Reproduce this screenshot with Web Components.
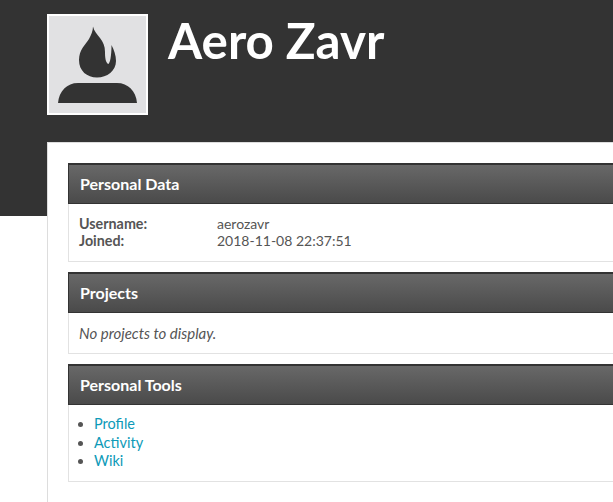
<!DOCTYPE html>
<html>
<head>
<meta charset="utf-8">
<title>Aero Zavr</title>
<style>
    html, body { margin: 0; height: 100%; overflow: hidden; background: #fff; }
    body { font-family: Lato, "Open Sans", sans-serif; font-size: 14px; color: #555; }
</style>
</head>
<body>
<profile-header name="Aero Zavr"></profile-header>
<main-panel>
    <info-section title="Personal Data">
        <data-row label="Username:" value="aerozavr"></data-row>
        <data-row label="Joined:" value="2018-11-08 22:37:51"></data-row>
    </info-section>
    <info-section title="Projects">
        <empty-note>No projects to display.</empty-note>
    </info-section>
    <info-section title="Personal Tools">
        <link-list>
            <a href="#">Profile</a>
            <a href="#">Activity</a>
            <a href="#">Wiki</a>
        </link-list>
    </info-section>
</main-panel>

<script>
class ProfileHeader extends HTMLElement {
    constructor() {
        super();
        const shadow = this.attachShadow({mode: 'open'});
        const name = this.getAttribute('name') || '';

        shadow.innerHTML = `
            <style>
                :host {
                    background: #333;
                    box-sizing: border-box;
                    display: flex;
                    gap: 20px;
                    height: 216px;
                    padding: 14px 0 0 47px;
                }

                .avatar {
                    background: #e1e1e3;
                    border: 2px solid #fff;
                    box-sizing: border-box;
                    display: block;
                    flex: none;
                    height: 101px;
                    width: 101px;
                }

                h1 {
                    color: #fff;
                    font-size: 49.300px;
                    font-weight: 700;
                    line-height: 52px;
                    margin: 0;
                }
            </style>
            <svg class="avatar" viewBox="2 2 97 97">
                <path fill="#333" d="M46 12.500C47 17 50 20 53 24C56 28 58 32 58 38C58 43 58.500 48 61 50C63 50 64.500 42 64.500 31C67 36 69 41 69 47C69 57 60 63.500 50 63.500C40 63.500 32 57 32 46C32 36 38 31 42 25C44 21 46 17 46 12.500Z"></path>
                <path fill="#333" d="M11 89C12 77 20 69 31 69H70C81 69 89 77 90 89Z"></path>
            </svg>
            <h1>${name}</h1>
        `;
    }
}

class MainPanel extends HTMLElement {
    constructor() {
        super();
        const shadow = this.attachShadow({mode: 'open'});

        shadow.innerHTML = `
            <style>
                :host {
                    background: #fff;
                    border: 1px solid #ddd;
                    box-sizing: border-box;
                    display: flex;
                    flex-direction: column;
                    gap: 10px;
                    margin: -74px 0 0 47px;
                    min-height: 400px;
                    padding: 20px 0 0 20px;
                    width: 640px;
                }
            </style>
            <slot></slot>
        `;
    }
}

class InfoSection extends HTMLElement {
    constructor() {
        super();
        const shadow = this.attachShadow({mode: 'open'});
        const title = this.getAttribute('title') || '';

        shadow.innerHTML = `
            <style>
                :host {
                    border: 1px solid #e2e2e2;
                    border-top: 0;
                    display: block;
                }

                h2 {
                    background: linear-gradient(#686868, #4a4a4a);
                    border: 1px solid #333;
                    border-top-width: 2px;
                    box-sizing: border-box;
                    color: #fff;
                    font-size: 16px;
                    font-weight: 700;
                    height: 41px;
                    line-height: 37px;
                    margin: 0 -1px;
                    padding-left: 11px;
                }
            </style>
            <h2>${title}</h2>
            <slot></slot>
        `;
    }
}

class DataRow extends HTMLElement {
    constructor() {
        super();
        const shadow = this.attachShadow({mode: 'open'});
        const label = this.getAttribute('label') || '';
        const value = this.getAttribute('value') || '';

        shadow.innerHTML = `
            <style>
                :host {
                    display: grid;
                    grid-template-columns: 138px 1fr;
                    line-height: 17px;
                    padding-left: 10px;
                }

                :host(:first-of-type) { padding-top: 11px; }
                :host(:last-of-type) { padding-bottom: 12px; }

                b {
                    font-size: 14.300px;
                    font-weight: 700;
                }
            </style>
            <b>${label}</b>
            <span>${value}</span>
        `;
    }
}

class EmptyNote extends HTMLElement {
    constructor() {
        super();
        const shadow = this.attachShadow({mode: 'open'});

        shadow.innerHTML = `
            <style>
                :host {
                    display: block;
                    font-size: 15px;
                    font-style: italic;
                    line-height: 18px;
                    padding: 11px 10px;
                }
            </style>
            <slot></slot>
        `;
    }
}

class LinkList extends HTMLElement {
    constructor() {
        super();
        const shadow = this.attachShadow({mode: 'open'});

        // light dom anchors become bullet rows
        const items = [...this.querySelectorAll('a')]
            .map(a => `<li><a href="${a.getAttribute('href')}">${a.textContent}</a></li>`)
            .join('');

        shadow.innerHTML = `
            <style>
                :host { display: block; }

                ul {
                    margin: 0;
                    padding: 10px 0 10px 25px;
                }

                li {
                    font-size: 14.500px;
                    line-height: 18.500px;
                }

                li::marker { color: #555; }

                a {
                    color: #0d9ab8;
                    text-decoration: none;
                }
            </style>
            <ul>${items}</ul>
        `;
    }
}

customElements.define('profile-header', ProfileHeader);
customElements.define('main-panel', MainPanel);
customElements.define('info-section', InfoSection);
customElements.define('data-row', DataRow);
customElements.define('empty-note', EmptyNote);
customElements.define('link-list', LinkList);
</script>
</body>
</html>
